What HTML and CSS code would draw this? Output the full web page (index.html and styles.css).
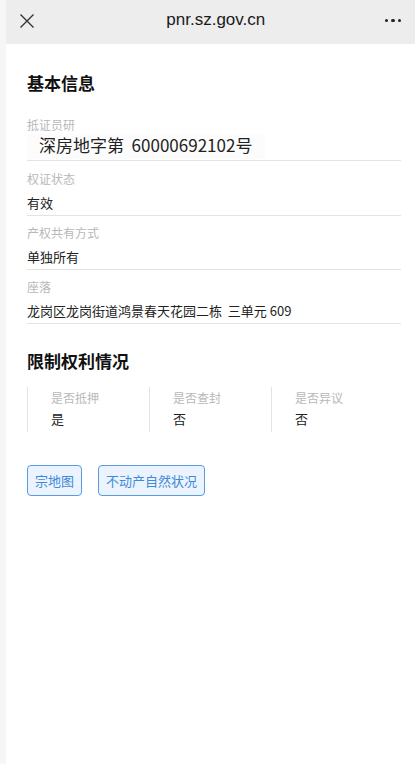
FILE: index.html
```html
<!DOCTYPE html>
<html lang="zh-CN">
<head>
    <meta charset="UTF-8">
    <meta name="viewport" content="width=device-width, initial-scale=1.0">
    <title>pnr.sz.gov.cn</title>
    <link rel="stylesheet" href="styles.css">
</head>
<body>
    <div class="edge"></div>
    <div class="page">
        <header class="topbar">
            <span class="close">
                <svg width="16" height="16" viewBox="0 0 16 16"><path d="M1.5 1.5 L14.5 14.5 M14.5 1.5 L1.5 14.5" stroke="#333" stroke-width="1.4" fill="none"/></svg>
            </span>
            <span class="domain">pnr.sz.gov.cn</span>
            <span class="more"><i></i><i></i><i></i></span>
        </header>

        <main class="content">
            <h2 class="section-title">基本信息</h2>

            <div class="field">
                <div class="label">抵证员研</div>
                <div class="value value-big">深房地字第&nbsp;&nbsp;60000692102号</div>
            </div>
            <div class="field">
                <div class="label">权证状态</div>
                <div class="value">有效</div>
            </div>
            <div class="field">
                <div class="label">产权共有方式</div>
                <div class="value">单独所有</div>
            </div>
            <div class="field">
                <div class="label">座落</div>
                <div class="value">龙岗区龙岗街道鸿景春天花园二栋&nbsp;&nbsp;三单元 609</div>
            </div>

            <h2 class="section-title section-two">限制权利情况</h2>

            <div class="limits">
                <div class="limit">
                    <div class="label">是否抵押</div>
                    <div class="value">是</div>
                </div>
                <div class="limit">
                    <div class="label">是否查封</div>
                    <div class="value">否</div>
                </div>
                <div class="limit">
                    <div class="label">是否异议</div>
                    <div class="value">否</div>
                </div>
            </div>

            <div class="actions">
                <a class="btn" href="#">宗地图</a>
                <a class="btn" href="#">不动产自然状况</a>
            </div>
        </main>
    </div>
</body>
</html>
```

FILE: styles.css
```css
* {
    margin: 0;
    padding: 0;
    box-sizing: border-box;
}

body {
    font-family: "Noto Sans CJK SC", "Liberation Sans", sans-serif;
    color: #222;
    background: #ffffff;
    display: flex;
    min-height: 764px;
}

.edge {
    width: 6px;
    flex-shrink: 0;
    background: #f6f6f6;
}

.page {
    flex: 1;
    display: flex;
    flex-direction: column;
}

.topbar {
    height: 44px;
    background: #ededed;
    display: flex;
    align-items: center;
    justify-content: space-between;
    padding: 0 14px 0 13px;
}

.close {
    display: flex;
    width: 16px;
    height: 16px;
    margin-top: -3px;
}

.domain {
    font-family: "Liberation Sans", Arial, sans-serif;
    font-size: 17px;
    color: #1a1a1a;
    margin-top: -4px;
    margin-left: 12px;
}

.more {
    display: flex;
    gap: 3px;
    margin-top: -3px;
}

.more i {
    width: 3.5px;
    height: 3.5px;
    border-radius: 50%;
    background: #222;
}

.content {
    padding: 27px 14px 0 21px;
}

.section-title {
    font-size: 17px;
    font-weight: bold;
    color: #111;
    line-height: 24px;
    margin-bottom: 21px;
}

.section-two {
    margin-top: 25px;
    margin-bottom: 14px;
}

.field {
    border-bottom: 1px solid #e3e3e3;
    padding-bottom: 1px;
    margin-bottom: 8px;
}

.field:first-of-type {
    margin-bottom: 9px;
}

.field + .field .value {
    margin-top: 4px;
}

.label {
    font-size: 12px;
    color: #b8b8b8;
    line-height: 18px;
}

.value {
    font-size: 13px;
    color: #222;
    line-height: 22px;
    margin-top: 3px;
}

.value-big {
    font-size: 17px;
    line-height: 22px;
    margin-top: 0;
    padding-left: 12px;
    padding-bottom: 3px;
    width: 238px;
    background: #fcfcfc;
}

.limits {
    display: grid;
    grid-template-columns: repeat(3, 1fr);
    margin-right: 8px;
}

.limit {
    border-left: 1px solid #e3e3e3;
    padding: 2px 0 2px 23px;
}

.limit .value {
    margin-top: 1px;
}

.actions {
    display: flex;
    gap: 16px;
    margin-top: 33px;
}

.btn {
    display: inline-block;
    font-size: 13px;
    color: #3f8ad6;
    background: #ebf4fe;
    border: 1px solid #5a9be0;
    border-radius: 4px;
    padding: 0 7px;
    line-height: 29px;
    text-decoration: none;
}
```
